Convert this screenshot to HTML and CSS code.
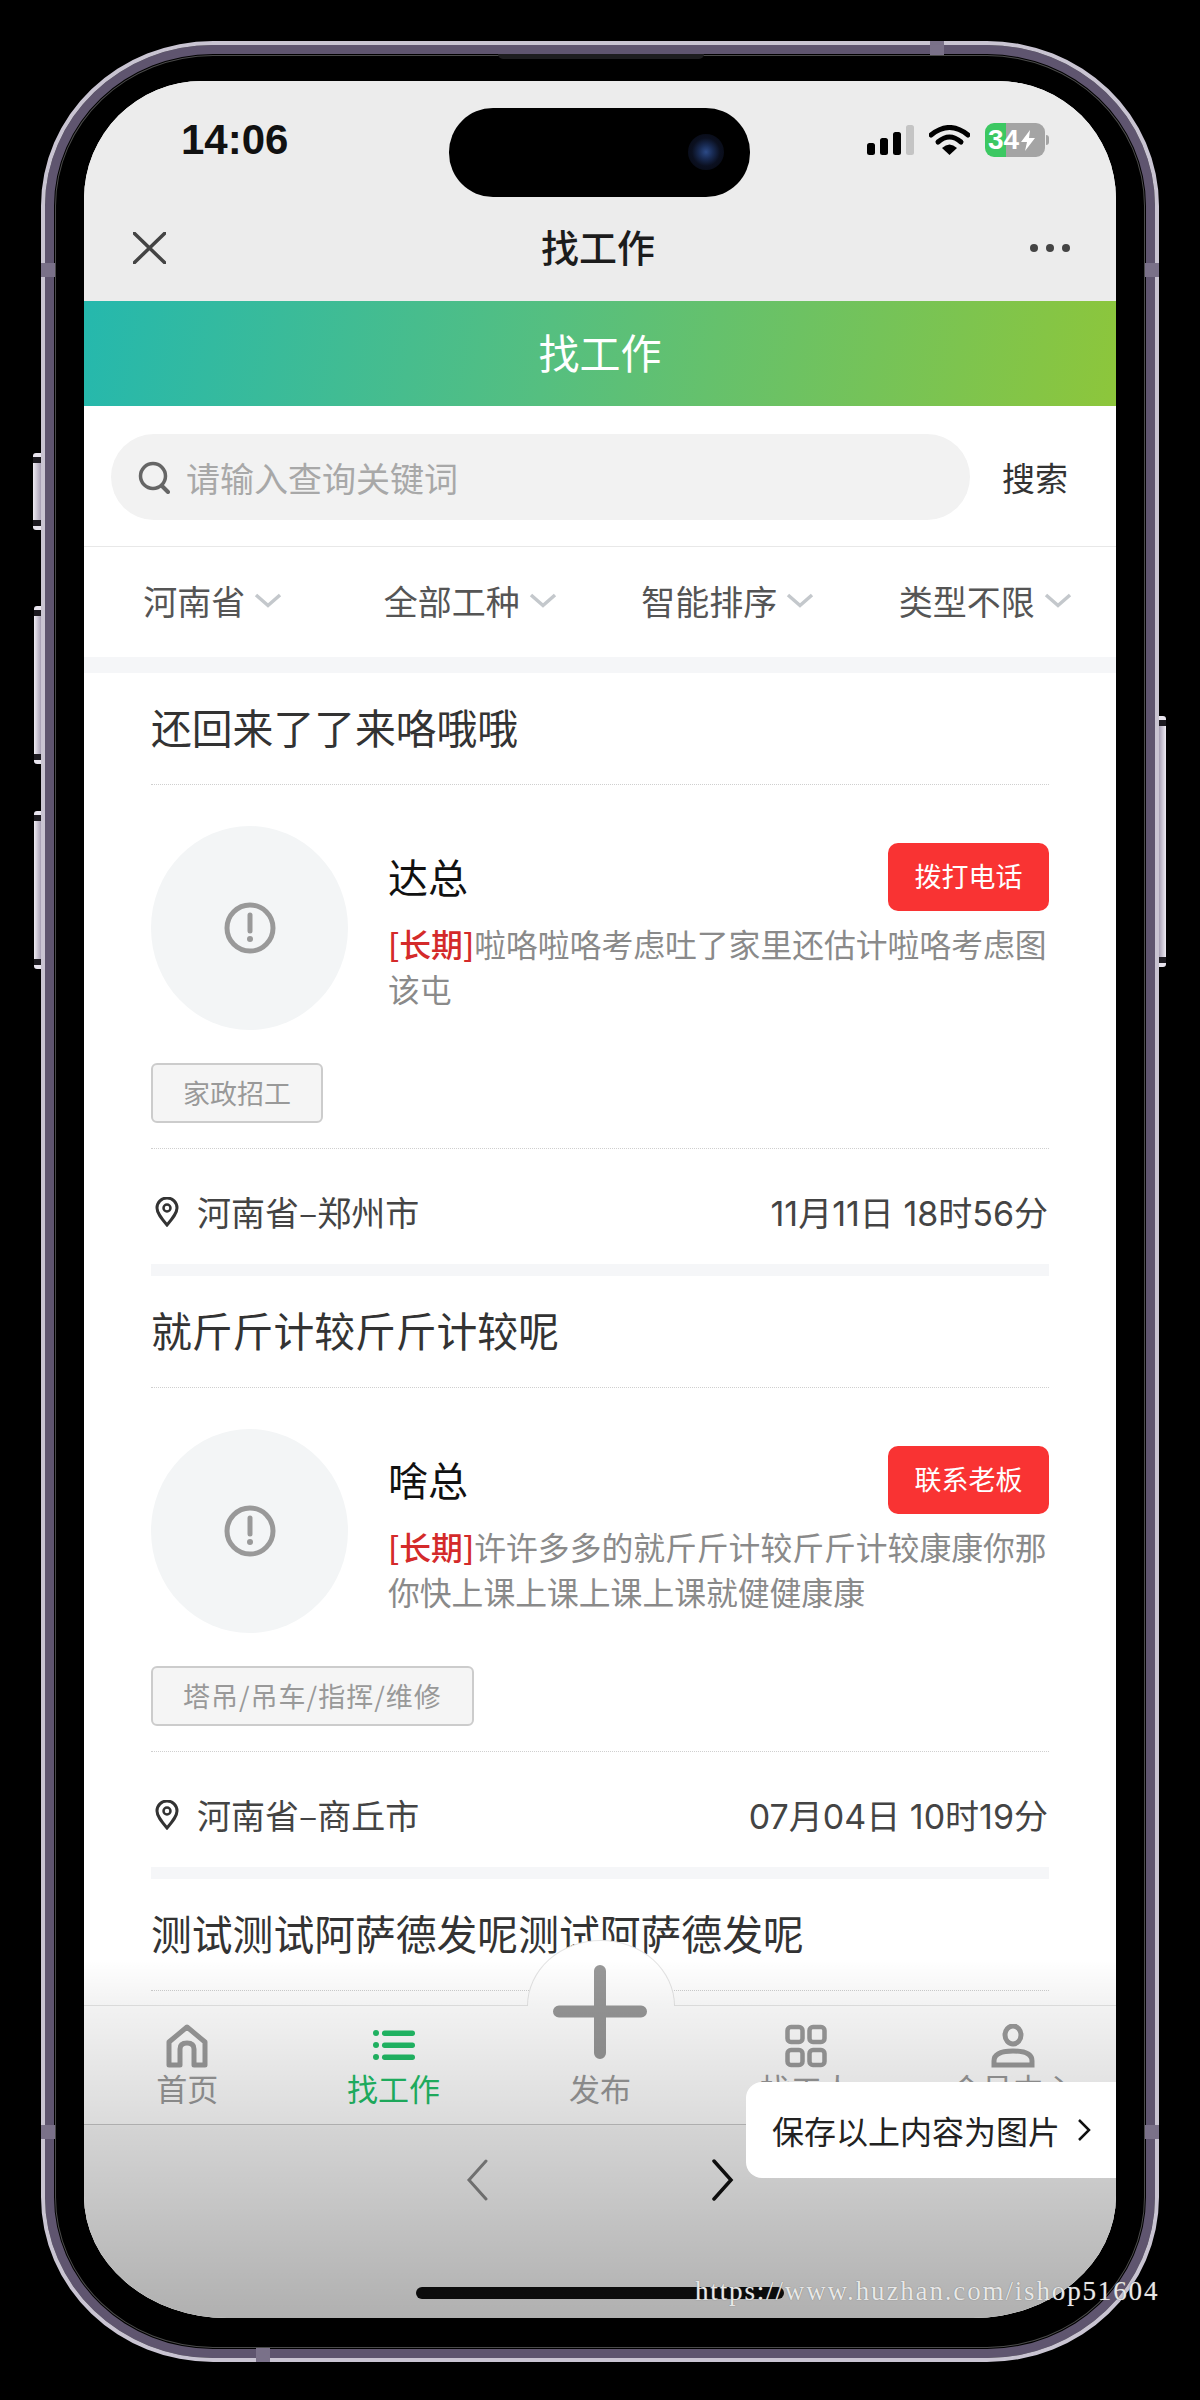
FILE: index.html
```html
<!DOCTYPE html>
<html lang="zh-CN">
<head>
<meta charset="UTF-8">
<title>找工作</title>
<link rel="stylesheet" href="styles.css">
</head>
<body>
<div class="phone">
  <span class="side-btn mute"></span>
  <span class="side-btn vol-up"></span>
  <span class="side-btn vol-down"></span>
  <span class="side-btn power"></span>
  <span class="band band-left"></span>
  <span class="band band-right"></span>
  <span class="band band-left-low"></span>
  <span class="band band-right-low"></span>
  <span class="band-h band-top"></span>
  <span class="band-h band-bottom"></span>
  <span class="speaker"></span>

  <div class="screen">
    <header class="top">
      <div class="status">
        <span class="time">14:06</span>
        <div class="status-icons">
          <svg width="47" height="30" viewBox="0 0 47 30"><rect x="0" y="18" width="8" height="12" rx="2.5" fill="#000"/><rect x="13" y="13" width="8" height="17" rx="2.5" fill="#000"/><rect x="26" y="7" width="8" height="23" rx="2.5" fill="#000"/><rect x="39" y="0" width="8" height="30" rx="2.5" fill="#c4c4c4"/></svg>
          <svg width="41" height="30" viewBox="0 0 41 30"><path d="M2 10 Q20.500 -5 39 10" fill="none" stroke="#000" stroke-width="5" stroke-linecap="round"/><path d="M9 17 Q20.500 7 32 17" fill="none" stroke="#000" stroke-width="5" stroke-linecap="round"/><path d="M13 23 Q20.500 16 28 23 L20.500 30 Z" fill="#000"/></svg>
          <div class="battery">
            <span>34</span>
            <svg width="14" height="21" viewBox="0 0 14 21"><path d="M9 0 L0 12 H6 L4 21 L14 8 H8 Z" fill="#fff"/></svg>
          </div>
        </div>
      </div>
      <div class="island"><i class="camera"></i></div>
      <nav class="navbar">
        <svg width="33" height="32" viewBox="0 0 33 32"><path d="M1 1 L32 31 M32 1 L1 31" stroke="#444" stroke-width="3.500" stroke-linecap="round"/></svg>
        <h1>找工作</h1>
        <svg width="40" height="8" viewBox="0 0 40 8"><circle cx="4" cy="4" r="4" fill="#444"/><circle cx="20" cy="4" r="4" fill="#444"/><circle cx="36" cy="4" r="4" fill="#444"/></svg>
      </nav>
    </header>

    <div class="banner">找工作</div>

    <div class="search-row">
      <div class="search-box">
        <svg width="32" height="33" viewBox="0 0 32 33"><circle cx="15" cy="15" r="12.500" fill="none" stroke="#666" stroke-width="3.500"/><path d="M24 25 L30 31" stroke="#666" stroke-width="4" stroke-linecap="round"/></svg>
        <span>请输入查询关键词</span>
      </div>
      <span class="search-btn">搜索</span>
    </div>

    <div class="filters">
      <div class="filter">河南省<svg class="chev" width="28" height="15" viewBox="0 0 28 15"><path d="M2 2 L14 12.500 L26 2" fill="none" stroke="#c4c8cc" stroke-width="3.500"/></svg></div>
      <div class="filter">全部工种<svg class="chev" width="28" height="15" viewBox="0 0 28 15"><path d="M2 2 L14 12.500 L26 2" fill="none" stroke="#c4c8cc" stroke-width="3.500"/></svg></div>
      <div class="filter">智能排序<svg class="chev" width="28" height="15" viewBox="0 0 28 15"><path d="M2 2 L14 12.500 L26 2" fill="none" stroke="#c4c8cc" stroke-width="3.500"/></svg></div>
      <div class="filter">类型不限<svg class="chev" width="28" height="15" viewBox="0 0 28 15"><path d="M2 2 L14 12.500 L26 2" fill="none" stroke="#c4c8cc" stroke-width="3.500"/></svg></div>
    </div>
    <div class="gap-band"></div>

    <article class="job">
      <h2>还回来了了来咯哦哦</h2>
      <div class="job-body">
        <div class="job-main">
          <div class="avatar"><svg width="52" height="52" viewBox="0 0 52 52"><circle cx="26" cy="26" r="23" fill="none" stroke="#999" stroke-width="5"/><path d="M26 13 V29" stroke="#999" stroke-width="5" stroke-linecap="round"/><circle cx="26" cy="37" r="3" fill="#999"/></svg></div>
          <div class="job-info">
            <div class="job-head"><span class="boss">达总</span><a class="call">拨打电话</a></div>
            <div class="desc">
              <p><b>[长期]</b>啦咯啦咯考虑吐了家里还估计啦咯考虑图</p>
              <p>该屯</p>
            </div>
          </div>
        </div>
        <span class="tag">家政招工</span>
      </div>
      <div class="job-foot">
        <span class="place"><svg width="24" height="30" viewBox="0 0 24 30"><path d="M12 28 C6 21 2 16 2 11 A10 10 0 0 1 22 11 C22 16 18 21 12 28 Z" fill="none" stroke="#333" stroke-width="3"/><circle cx="12" cy="11" r="3.500" fill="none" stroke="#333" stroke-width="2.500"/></svg>河南省–郑州市</span>
        <span class="when">11月11日 18时56分</span>
      </div>
    </article>

    <article class="job">
      <h2>就斤斤计较斤斤计较呢</h2>
      <div class="job-body">
        <div class="job-main">
          <div class="avatar"><svg width="52" height="52" viewBox="0 0 52 52"><circle cx="26" cy="26" r="23" fill="none" stroke="#999" stroke-width="5"/><path d="M26 13 V29" stroke="#999" stroke-width="5" stroke-linecap="round"/><circle cx="26" cy="37" r="3" fill="#999"/></svg></div>
          <div class="job-info">
            <div class="job-head"><span class="boss">啥总</span><a class="call">联系老板</a></div>
            <div class="desc">
              <p><b>[长期]</b>许许多多的就斤斤计较斤斤计较康康你那</p>
              <p>你快上课上课上课上课就健健康康</p>
            </div>
          </div>
        </div>
        <span class="tag wide">塔吊/吊车/指挥/维修</span>
      </div>
      <div class="job-foot">
        <span class="place"><svg width="24" height="30" viewBox="0 0 24 30"><path d="M12 28 C6 21 2 16 2 11 A10 10 0 0 1 22 11 C22 16 18 21 12 28 Z" fill="none" stroke="#333" stroke-width="3"/><circle cx="12" cy="11" r="3.500" fill="none" stroke="#333" stroke-width="2.500"/></svg>河南省–商丘市</span>
        <span class="when">07月04日 10时19分</span>
      </div>
    </article>

    <article class="job">
      <h2>测试测试阿萨德发呢测试阿萨德发呢</h2>
    </article>

    <div class="bottom">
      <div class="tabbar">
        <div class="bump"></div>
        <div class="tab">
          <svg width="42" height="44" viewBox="0 0 42 44"><path d="M3 41 V18 L21 3 L39 18 V41 H28 V25 Q28 19 21 19 Q14 19 14 25 V41 Z" fill="none" stroke="#9b9b9b" stroke-width="5" stroke-linejoin="round"/></svg>
          <span>首页</span>
        </div>
        <div class="tab on">
          <svg width="42" height="44" viewBox="0 0 42 44"><g fill="#22bf68"><circle cx="3" cy="9" r="3"/><circle cx="3" cy="21" r="3"/><circle cx="3" cy="33" r="3"/><rect x="9" y="6.500" width="33" height="5.500" rx="2.700"/><rect x="9" y="18.500" width="33" height="5.500" rx="2.700"/><rect x="9" y="30.500" width="33" height="5.500" rx="2.700"/></g></svg>
          <span>找工作</span>
        </div>
        <div class="tab plus">
          <svg width="94" height="94" viewBox="0 0 94 94"><path d="M47 6 V88 M6 46.500 H88" stroke="#989898" stroke-width="12" stroke-linecap="round"/></svg>
          <span>发布</span>
        </div>
        <div class="tab">
          <svg width="42" height="44" viewBox="0 0 42 44"><g fill="none" stroke="#9b9b9b" stroke-width="4.500"><rect x="2.500" y="3" width="15" height="15" rx="3.500"/><rect x="24.500" y="3" width="15" height="15" rx="3.500"/><rect x="2.500" y="26" width="15" height="15" rx="3.500"/><rect x="24.500" y="26" width="15" height="15" rx="3.500"/></g></svg>
          <span>找工人</span>
        </div>
        <div class="tab">
          <svg width="44" height="44" viewBox="0 0 44 44"><ellipse cx="22" cy="11" rx="8" ry="9" fill="none" stroke="#9b9b9b" stroke-width="5"/><path d="M3 41 V37 Q3 27 22 27 Q41 27 41 37 V41 Z" fill="none" stroke="#9b9b9b" stroke-width="5"/></svg>
          <span>会员中心</span>
        </div>
      </div>
      <div class="wx-bar">
        <div class="wx-arrows">
          <svg width="22" height="42" viewBox="0 0 22 42"><path d="M20 2 L3 21 L20 40" fill="none" stroke="#8c8c8c" stroke-width="3" stroke-linecap="round"/></svg>
          <svg width="22" height="42" viewBox="0 0 22 42"><path d="M2 2 L19 21 L2 40" fill="none" stroke="#111" stroke-width="3.500" stroke-linecap="round"/></svg>
        </div>
        <div class="home-line"></div>
      </div>
      <div class="shade"></div>
      <div class="save-pop">保存以上内容为图片<svg width="14" height="24" viewBox="0 0 14 24"><path d="M2 2 L12 12 L2 22" fill="none" stroke="#111" stroke-width="2.500"/></svg></div>
    </div>
  </div>
</div>
<div class="watermark">https://www.huzhan.com/ishop51604</div>
</body>
</html>
```

FILE: styles.css
```css
* {
  box-sizing: border-box;
}
html, body {
  margin: 0;
  background: #000;
}
body {
  height: 2400px;
  position: relative;
  overflow: hidden;
  font-family: "Noto Sans CJK SC", "Liberation Sans", sans-serif;
}

/* phone body */
.phone {
  position: relative;
  width: 1118px;
  height: 2321px;
  margin: 41px auto 0;
  padding: 36px 39px 40px;
  border: 4px solid #c9c4d2;
  border-radius: 172px 172px 172px 172px / 165px 165px 165px 165px;
  box-shadow: inset 0 0 0 9px #5f556f, inset 0 0 0 10px #000, inset 0 0 0 11px #4a4a4a;
}
.side-btn {
  position: absolute;
  width: 8px;
  border-radius: 3px 0 0 3px;
  background:
    linear-gradient(180deg, #e8e4ee 0, #e8e4ee 4px, #1c1a20 4px, #1c1a20 10px, transparent 10px, transparent calc(100% - 10px), #1c1a20 calc(100% - 10px), #1c1a20 calc(100% - 4px), #e8e4ee calc(100% - 4px)),
    linear-gradient(90deg, #efecf3, #a79fb4);
}
.mute { left: -12px; top: 408px; height: 77px; }
.vol-up { left: -11px; top: 561px; height: 158px; width: 7px; }
.vol-down { left: -11px; top: 766px; height: 158px; width: 7px; }
.power {
  right: -11px;
  top: 671px;
  height: 251px;
  width: 7px;
  border-radius: 0 3px 3px 0;
  background:
    linear-gradient(180deg, #e8e4ee 0, #e8e4ee 4px, #1c1a20 4px, #1c1a20 10px, transparent 10px, transparent calc(100% - 10px), #1c1a20 calc(100% - 10px), #1c1a20 calc(100% - 4px), #e8e4ee calc(100% - 4px)),
    linear-gradient(90deg, #a79fb4, #efecf3);
}
.band {
  position: absolute;
  width: 14px;
  height: 14px;
  background: #7a7189;
}
.band-left { left: -4px; top: 218px; }
.band-right { right: -4px; top: 218px; }
.band-left-low { left: -4px; top: 2080px; }
.band-right-low { right: -4px; top: 2080px; }
.band-h {
  position: absolute;
  width: 14px;
  height: 14px;
  background: #7a7189;
}
.band-top { left: 885px; top: -4px; }
.band-bottom { left: 211px; bottom: -4px; }
.speaker {
  position: absolute;
  left: 453px;
  top: 9px;
  width: 206px;
  height: 5px;
  background: #1d1d1f;
  border-radius: 0 0 6px 6px;
}

.screen {
  position: relative;
  width: 1032px;
  height: 2237px;
  overflow: hidden;
  background: #fff;
  border-radius: 118px 118px 143px 143px / 118px 118px 122px 122px;
}

/* status + title */
.top {
  position: relative;
  height: 220px;
  background: #ececec;
}
.status {
  height: 118px;
  padding: 0 71px 0 97px;
  display: flex;
  align-items: center;
  justify-content: space-between;
}
.time {
  font-family: "Liberation Sans", sans-serif;
  font-weight: 700;
  font-size: 42px;
  color: #111;
}
.status-icons {
  display: flex;
  align-items: center;
  gap: 15px;
}
.battery {
  position: relative;
  width: 60px;
  height: 34px;
  padding-left: 3px;
  display: flex;
  align-items: center;
  gap: 2px;
  border-radius: 9px;
  background: linear-gradient(90deg, #3cc862 35%, #a4a4a4 35%);
  color: #fff;
  font-family: "Liberation Sans", sans-serif;
  font-weight: 700;
  font-size: 28px;
}
.battery::after {
  content: "";
  position: absolute;
  right: -4px;
  top: 12px;
  width: 3px;
  height: 10px;
  background: #a4a4a4;
  border-radius: 0 3px 3px 0;
}
.island {
  position: absolute;
  left: 365px;
  top: 27px;
  width: 301px;
  height: 89px;
  background: #000;
  border-radius: 44px;
}
.camera {
  position: absolute;
  right: 26px;
  top: 26px;
  width: 36px;
  height: 36px;
  border-radius: 50%;
  background: radial-gradient(circle, #2c4a86 0, #182a52 28%, #0b1020 55%, #05070f 100%);
}
.navbar {
  height: 102px;
  padding: 0 46px 4px 49px;
  display: flex;
  align-items: center;
}
.navbar h1 {
  flex: 1;
  margin: -6px 0 0;
  text-align: center;
  font-size: 38px;
  font-weight: 500;
  color: #1c1c1c;
}

.banner {
  height: 105px;
  line-height: 101px;
  text-align: center;
  font-size: 41px;
  color: #fff;
  background: linear-gradient(100deg, #25b8ad 0%, #55bf80 45%, #8dc63b 100%);
}

/* search */
.search-row {
  display: flex;
  align-items: center;
  gap: 32px;
  height: 141px;
  padding: 2px 48px 0 27px;
  border-bottom: 1px solid #e8e8e8;
}
.search-box {
  flex: 1;
  height: 86px;
  padding-left: 27px;
  display: flex;
  align-items: center;
  gap: 16px;
  border-radius: 43px;
  background: #f2f2f2;
  font-size: 34px;
  color: #a8a8a8;
}
.search-btn {
  font-size: 33px;
  color: #333;
}

.filters {
  display: grid;
  grid-template-columns: repeat(4, 1fr);
  height: 110px;
  padding: 0 2px 3px 0;
  align-items: center;
}
.filter {
  display: flex;
  align-items: center;
  justify-content: center;
  gap: 9px;
  font-size: 34px;
  color: #555;
}
.gap-band {
  height: 16px;
  background: #f5f6f8;
}

/* job cards */
.job {
  margin: 0 67px;
}
.job h2 {
  height: 112px;
  line-height: 108px;
  margin: 0;
  font-size: 40.800px;
  font-weight: 400;
  color: #333;
  border-bottom: 1px dotted #cfcfcf;
}
.job-body {
  height: 364px;
  padding-top: 41px;
  border-bottom: 1px dotted #cfcfcf;
}
.job-main {
  display: flex;
  height: 204px;
}
.avatar {
  flex: none;
  width: 197px;
  height: 204px;
  display: flex;
  align-items: center;
  justify-content: center;
  border-radius: 50%;
  background: #f3f5f6;
}
.job-info {
  flex: 1;
  min-width: 0;
  margin-left: 40px;
  padding-top: 16px;
}
.job-head {
  display: flex;
  align-items: center;
  justify-content: space-between;
}
.boss {
  font-size: 40px;
  line-height: 68px;
  margin-top: -2px;
  color: #111;
}
.call {
  width: 161px;
  height: 68px;
  margin-top: 1px;
  line-height: 66px;
  text-align: center;
  border-radius: 10px;
  background: #f93333;
  color: #fff;
  font-size: 27px;
}
.desc {
  margin-top: 10px;
  font-size: 31.800px;
  line-height: 45px;
  color: #8a8a8a;
}
.desc p {
  margin: 0;
  white-space: nowrap;
}
.desc b {
  font-weight: 500;
  color: #d42a2a;
}
.tag {
  display: inline-block;
  height: 60px;
  line-height: 56px;
  margin-top: 33px;
  padding: 0 30px;
  border: 2px solid #ccc;
  border-radius: 6px;
  background: #f5f5f5;
  font-size: 27px;
  color: #999;
}
.tag.wide {
  letter-spacing: 1px;
}
.job-foot {
  display: flex;
  align-items: center;
  justify-content: space-between;
  height: 127px;
  padding: 10px 1px 0 0;
  border-bottom: 12px solid #f5f6f8;
  font-size: 34px;
  color: #444;
}
.place {
  display: flex;
  align-items: center;
  gap: 18px;
  padding-left: 4px;
}
.when {
  font-family: Inter, "Noto Sans CJK SC", sans-serif;
  font-size: 34px;
}

/* bottom tabs and browser bar */
.bottom {
  position: absolute;
  left: 0;
  right: 0;
  bottom: 0;
  height: 313px;
}
.tabbar {
  position: relative;
  display: grid;
  grid-template-columns: repeat(5, 1fr);
  height: 120px;
  background: #fff;
  border-top: 1px solid #e6e6e6;
  border-bottom: 1px solid #cccccc;
}
.bump {
  position: absolute;
  left: 443px;
  top: -66px;
  width: 148px;
  height: 66px;
  background: #fff;
  border: 1px solid #e4e4e4;
  border-bottom: 0;
  border-radius: 74px 74px 0 0 / 66px 66px 0 0;
}
.tab {
  position: relative;
  display: flex;
  flex-direction: column;
  align-items: center;
  padding-top: 18px;
  font-size: 31px;
  line-height: 40px;
  color: #9b9b9b;
}
.tab svg {
  flex: none;
}
.tab.on {
  color: #22bf68;
}
.plus svg {
  position: absolute;
  top: -41px;
}
.plus span {
  margin-top: 44px;
}
.wx-bar {
  position: relative;
  height: 193px;
  background: #fff;
}
.wx-arrows {
  display: flex;
  justify-content: center;
  gap: 224px;
  padding-top: 34px;
}
.home-line {
  position: absolute;
  left: 332px;
  top: 162px;
  width: 368px;
  height: 12px;
  border-radius: 6px;
  background: #111;
}
.shade {
  position: absolute;
  left: 0;
  right: 0;
  top: -45px;
  bottom: 0;
  pointer-events: none;
  background: linear-gradient(180deg,
    rgba(0,0,0,0) 0,
    rgba(0,0,0,.05) 12.6%,
    rgba(0,0,0,.14) 45.8%,
    rgba(0,0,0,.17) 46.4%,
    rgba(0,0,0,.31) 100%);
}
.save-pop {
  position: absolute;
  right: 0;
  top: 77px;
  width: 370px;
  height: 96px;
  padding-left: 26px;
  display: flex;
  align-items: center;
  gap: 17px;
  background: #fff;
  border-radius: 16px 0 0 16px;
  font-size: 32px;
  color: #222;
}

.watermark {
  position: absolute;
  left: 695px;
  top: 2274px;
  font-family: "Liberation Serif", serif;
  font-size: 27px;
  line-height: 34px;
  letter-spacing: 1.850px;
  color: #e8e8e8;
  text-shadow: 0 0 1px #666;
  white-space: nowrap;
}
```
